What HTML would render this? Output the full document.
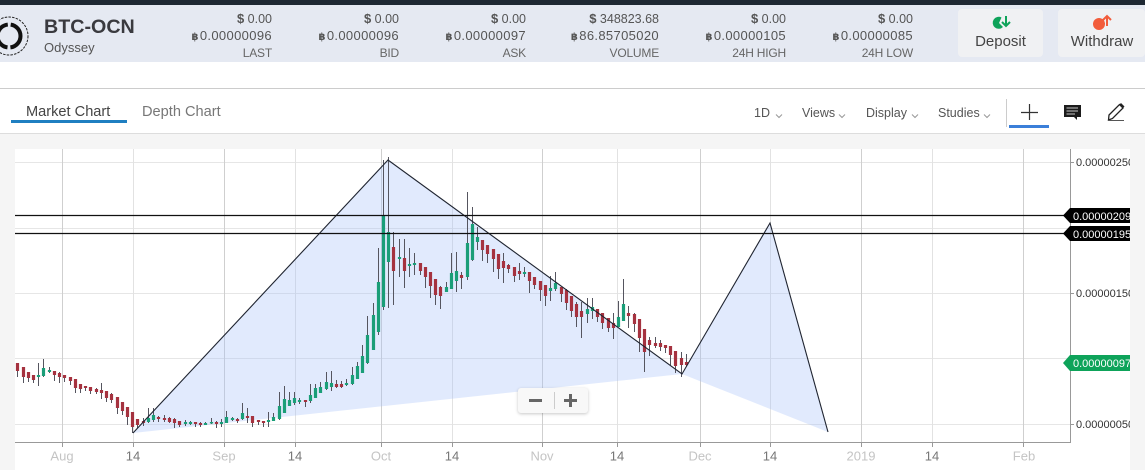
<!DOCTYPE html>
<html><head><meta charset="utf-8">
<style>
html,body{margin:0;padding:0;width:1145px;height:470px;overflow:hidden;background:#fff;font-family:"Liberation Sans","DejaVu Sans",sans-serif;color:#444}
.a{position:absolute;white-space:nowrap}
.s{position:absolute;top:10px;text-align:right;width:130px;font-size:12.5px;color:#555}
.s div{position:absolute;right:0;white-space:nowrap}
.s .d{top:1px}.s .b{top:18px;font-size:13px;letter-spacing:.35px}.s .l{top:36px;color:#666;font-size:12px;letter-spacing:-.2px}
.s i{font-style:normal;font-weight:bold;font-size:13px}
.s u{text-decoration:none;font-size:10px;font-family:"DejaVu Sans",sans-serif;font-weight:bold;margin-right:1px}
.btn{position:absolute;top:9px;height:48px;background:#f0f1f3;border-radius:4px;text-align:center;font-size:15px;color:#444}
.btn span{position:absolute;left:0;right:0;top:24px}
.m{position:absolute;top:106px;font-size:12.5px;color:#555}
</style></head><body>
<div class="a" style="left:0;top:0;width:1145px;height:5px;background:#1e2833"></div>
<div class="a" style="left:0;top:5px;width:1145px;height:57px;background:#e5e9f2"></div>
<div class="a" style="left:0;top:88px;width:1145px;height:1px;background:#ccc"></div>
<div class="a" style="left:0;top:133px;width:1145px;height:337px;background:#f5f5f5"></div>
<div class="a" style="left:0;top:133px;width:1145px;height:1px;background:#ddd"></div>

<svg class="a" style="left:0;top:5px" width="40" height="57" viewBox="0 5 40 57">
<circle cx="9" cy="36" r="19" fill="none" stroke="#222" stroke-width="1" stroke-dasharray="2.5 1.2"/>
<circle cx="9" cy="36" r="11.500" fill="none" stroke="#111" stroke-width="4" stroke-dasharray="33.100 3" stroke-dashoffset="-19.500"/>
</svg>
<div class="a" style="left:44px;top:16px;font-size:19.700px;font-weight:bold;color:#3a3a3f">BTC-OCN</div>
<div class="a" style="left:44px;top:40px;font-size:13px;color:#555">Odyssey</div>

<div class="s" style="left:142px"><div class="d"><i>$</i> 0.00</div><div class="b"><u>฿</u>0.00000096</div><div class="l">LAST</div></div>
<div class="s" style="left:269px"><div class="d"><i>$</i> 0.00</div><div class="b"><u>฿</u>0.00000096</div><div class="l">BID</div></div>
<div class="s" style="left:396px"><div class="d"><i>$</i> 0.00</div><div class="b"><u>฿</u>0.00000097</div><div class="l">ASK</div></div>
<div class="s" style="left:529px"><div class="d"><i>$</i> 348823.68</div><div class="b"><u>฿</u>86.85705020</div><div class="l">VOLUME</div></div>
<div class="s" style="left:656px"><div class="d"><i>$</i> 0.00</div><div class="b"><u>฿</u>0.00000105</div><div class="l">24H HIGH</div></div>
<div class="s" style="left:783px"><div class="d"><i>$</i> 0.00</div><div class="b"><u>฿</u>0.00000085</div><div class="l">24H LOW</div></div>

<div class="btn" style="left:958px;width:85px"><span>Deposit</span></div>
<div class="btn" style="left:1058px;width:87px"><span style="left:1px">Withdraw</span></div>
<svg class="a" style="left:990px;top:14px" width="22" height="18" viewBox="0 0 22 18">
<path d="M11.500 3.500A6 6 0 1 0 13 13L9 9Z" fill="#0ea35a"/>
<path d="M12 8L16 12L20 8M16 12V2" fill="none" stroke="#0ea35a" stroke-width="2"/>
</svg>
<svg class="a" style="left:1091px;top:14px" width="22" height="18" viewBox="0 0 22 18">
<circle cx="8" cy="10" r="6" fill="#f25c3b"/>
<path d="M12 6L16 2L20 6M16 2V12" fill="none" stroke="#f25c3b" stroke-width="2"/>
</svg>

<div class="a" style="left:26px;top:104px;font-size:14.6px;color:#444">Market Chart</div>
<div class="a" style="left:11px;top:120px;width:116px;height:3px;background:#1f7fc1"></div>
<div class="a" style="left:142px;top:104px;font-size:14.6px;color:#777">Depth Chart</div>
<div class="m" style="left:754px">1D</div>
<div class="m" style="left:802px">Views</div>
<div class="m" style="left:866px">Display</div>
<div class="m" style="left:938px">Studies</div>
<svg class="a" style="left:740px;top:95px" width="405" height="38" viewBox="740 95 405 38">
<path d="M776 114.500l3 3 3-3M839 114.500l3 3 3-3M912 114.500l3 3 3-3M984 114.500l3 3 3-3" fill="none" stroke="#999" stroke-width="1"/>
<path d="M1006.500 99V127" stroke="#ccc"/>
<path d="M1029.500 104V120M1021 112.500H1038" stroke="#333" stroke-width="1.200"/>
<rect x="1009" y="125" width="40" height="3" fill="#3b7fd9"/>
<path d="M1064 105H1081V117H1077V120L1074 117H1064Z" fill="#1c1c1c"/>
<path d="M1066.500 108H1078M1066.500 111H1078M1066.500 114H1075" stroke="#fff" stroke-width=".8"/>
<path d="M1109 115L1119.500 104.500L1123 108L1112.500 118.500L1108.500 120Z" fill="none" stroke="#222" stroke-width="1.300"/>
<path d="M1119.500 104.500L1121 103L1124.500 106.500L1123 108Z" fill="#222"/>
<path d="M1108 120.500H1124" stroke="#555"/>
</svg>

<svg class="a" style="left:15px;top:149px" width="1115" height="321" viewBox="15 149 1115 321">
<rect x="15" y="149" width="1115" height="321" fill="#fff"/>
<path d="M15 162.500H1070M15 228.500H1070M15 293.500H1070M15 358.500H1070M15 424.500H1070" stroke="#e6e6e6"/>
<path d="M133.500 149V442M295.500 149V442M452.500 149V442M617.500 149V442M770.500 149V442M932.500 149V442" stroke="#e2e2e2"/>
<path d="M62.500 149V442M224.500 149V442M381.500 149V442M542.500 149V442M700.500 149V442M861.500 149V442M1023.500 149V442" stroke="#cfcfcf"/>
<path d="M133 433L388 160L682 374ZM682 374L770 223L828 432Z" fill="rgba(165,190,250,.33)"/>
<path d="M1070.500 149V442.500H15" fill="none" stroke="#999"/>
<path d="M62.500 443V447M133.500 443V447M224.500 443V447M295.500 443V447M381.500 443V447M452.500 443V447M542.500 443V447M617.500 443V447M700.500 443V447M770.500 443V447M861.500 443V447M932.500 443V447M1023.500 443V447M1071 162.500H1074M1071 228.500H1074M1071 293.500H1074M1071 358.500H1074M1071 424.500H1074" stroke="#999"/>

<path fill="none" stroke="#55555f" stroke-width="1" d="M17.500 363V377M23.500 367V383M28.500 372V382M33.500 375V383M38.500 363V386M43.500 359V377M49.500 367V373M54.500 371V381M59.500 372V383M64.500 375V382M70.500 377V385M75.500 379V393M80.500 384V393M85.500 386V391M90.500 387V394M96.500 388V394M101.500 383V399M106.500 391V402M111.500 393V403M117.500 397V414M122.500 402V415M127.500 407V425M132.500 412V433M137.500 419V428M143.500 418V426M148.500 408V423M153.500 408V422M158.500 416V422M164.500 415V422M169.500 417V423M174.500 418V428M179.500 421V427M185.500 420V426M190.500 421V425M195.500 422V427M200.500 422V427M205.500 422V425M211.500 418V424M216.500 421V428M221.500 419V427M226.500 411V423M232.500 417V421M237.500 418V423M242.500 403V420M247.500 408V423M252.500 416V427M258.500 420V425M263.500 421V427M268.500 412V427M273.500 413V421M279.500 392V420M284.500 386V413M289.500 392V406M294.500 392V405M299.500 398V404M305.500 400V407M310.500 384V403M315.500 384V398M320.500 382V393M326.500 372V390M331.500 371V391M336.500 380V388M341.500 381V388M346.500 379V386M352.500 367V385M357.500 362V379M362.500 345V373M367.500 316V364M373.500 303V350M378.500 248V335M383.500 160V310M388.500 157V308M393.500 232V305M399.500 239V277M404.500 239V288M409.500 248V277M414.500 253V275M420.500 263V275M425.500 267V288M430.500 272V298M435.500 279V305M440.500 286V309M446.500 282V292M451.500 253V289M456.500 252V292M461.500 272V289M467.500 192V280M472.500 207V261M477.500 227V250M482.500 240V261M487.500 245V263M493.500 249V272M498.500 254V279M503.500 253V283M508.500 264V273M514.500 267V282M519.500 263V280M524.500 267V277M529.500 272V293M534.500 277V289M540.500 281V301M545.500 285V306M550.500 276V301M555.500 272V291M561.500 287V302M566.500 289V310M571.500 296V317M576.500 302V327M581.500 302V338M587.500 298V323M592.500 298V319M597.500 309V322M602.500 313V329M608.500 318V332M613.500 313V339M618.500 301V327M623.500 279V321M628.500 306V328M634.500 313V332M639.500 319V352M644.500 329V372M649.500 337V356M655.500 337V348M660.500 340V351M665.500 345V353M670.500 346V365M675.500 351V373M681.500 352V377M686.500 354V366"/>

<path fill="none" stroke="#a5323f" stroke-width="3.200" d="M17.500 363V371M23.500 367V377M28.500 372V378M33.500 375V380M54.500 371V375M59.500 373V377M64.500 375V378M70.500 377V381M75.500 379V388M80.500 384V389M85.500 386V388M90.500 387V391M96.500 389V392M101.500 390V393M106.500 391V398M111.500 394V400M117.500 397V408M122.500 402V411M127.500 407V417M132.500 412V427M137.500 419V425M143.500 421V423M158.500 417V419M164.500 418V420M169.500 418V422M174.500 419V423M179.500 421V425M195.500 422V424M200.500 423V425M216.500 422V424M237.500 419V421M247.500 416V418M252.500 416V423M258.500 420V422M263.500 421V423M305.500 400V402M336.500 384V387M341.500 384V387M393.500 247V271M404.500 258V271M420.500 263V271M425.500 267V277M430.500 272V286M435.500 279V295M440.500 287V296M461.500 275V278M482.500 240V250M487.500 245V254M493.500 249V259M498.500 254V269M503.500 261V268M508.500 265V269M514.500 267V276M519.500 271V274M529.500 272V281M534.500 277V285M540.500 281V290M545.500 285V296M561.500 287V294M566.500 290V303M571.500 296V311M576.500 304V317M581.500 311V317M597.500 309V317M602.500 313V323M608.500 318V328M613.500 323V328M628.500 313V316M634.500 314V324M639.500 319V338M644.500 329V352M649.500 340V345M655.500 343V346M660.500 343V347M665.500 345V348M670.500 346V355M675.500 351V366M681.500 358V365M686.500 362V365"/>

<path fill="none" stroke="#1a9e78" stroke-width="3.200" d="M38.500 375V377M43.500 368V376M49.500 370V372M148.500 418V422M153.500 415V420M185.500 422V424M190.500 422V424M205.500 423V425M211.500 422V423.500M221.500 422V424M226.500 417V423M232.500 418V420M242.500 413V419M268.500 420V422M273.500 417V421M279.500 406V419M284.500 399V413M289.500 400V406M294.500 398V403M299.500 400V402M310.500 395V401M315.500 388V398M320.500 387V393M326.500 382V389M331.500 383V387M346.500 383V385M352.500 375V384M357.500 366V379M362.500 356V373M367.500 335V363M373.500 315V350M378.500 282V332M383.500 215V307M388.500 232V262M399.500 257V259M409.500 264V266M414.500 263V265M446.500 287V292M451.500 273V289M456.500 271V281M467.500 243V277M472.500 224V260M477.500 237V242M524.500 272V274M550.500 288V291M555.500 283V289M587.500 309V314M592.500 307V311M618.500 317V327M623.500 304V321"/>

<path d="M133 433L388 160L682 374L770 223L828 432" fill="none" stroke="#1f2430" stroke-width="1.100"/>
<path d="M15 215.500H1070M15 233.500H1070" stroke="#111" stroke-width="1.200"/>

<path d="M1063 215.500L1070 208H1130V223H1070Z" fill="#000"/>
<path d="M1063 233.500L1070 226H1130V241H1070Z" fill="#000"/>
<path d="M1063 363L1070 355H1130V371H1070Z" fill="#0ea35a"/>
<g font-family="Liberation Sans,sans-serif" font-size="11" fill="#333">
<text x="1076" y="166">0.00000250</text>
<text x="1076" y="297">0.00000150</text>
<text x="1076" y="428">0.00000050</text>
<g fill="#fff"><text x="1073" y="220">0.00000209</text>
<text x="1073" y="238">0.00000195</text>
<text x="1073" y="367">0.00000097</text></g>
</g>
<g font-family="Liberation Sans,sans-serif" font-size="13" text-anchor="middle">
<g fill="#c4c4c4"><text x="62" y="460.500">Aug</text><text x="224" y="460.500">Sep</text><text x="381" y="460.500">Oct</text><text x="542" y="460.500">Nov</text><text x="700" y="460.500">Dec</text><text x="861" y="460.500">2019</text><text x="1024" y="460.500">Feb</text></g>
<g fill="#777"><text x="133" y="460.500">14</text><text x="295" y="460.500">14</text><text x="452" y="460.500">14</text><text x="617" y="460.500">14</text><text x="770" y="460.500">14</text><text x="932" y="460.500">14</text></g>
</g>
</svg>

<div class="a" style="left:518px;top:388px;width:70px;height:25px;background:#f8f8f8;border-radius:3px;box-shadow:0 1px 3px rgba(0,0,0,.22)"></div>
<svg class="a" style="left:518px;top:388px" width="70" height="25" viewBox="518 388 70 25">
<path d="M529 400.500H542M564 400.500H577M570.500 394V407" stroke="#666" stroke-width="3" fill="none"/>
<path d="M554.500 392V409" stroke="#ccc"/>
</svg>
</body></html>
